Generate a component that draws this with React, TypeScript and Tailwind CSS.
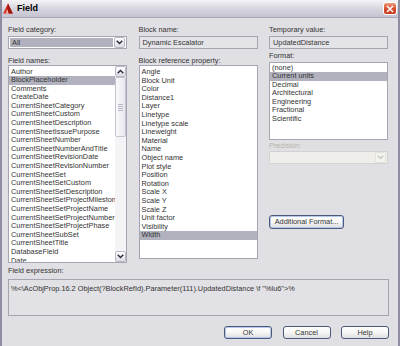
import type { ReactNode } from "react";

const fieldNames = [
  "Author",
  "BlockPlaceholder",
  "Comments",
  "CreateDate",
  "CurrentSheetCategory",
  "CurrentSheetCustom",
  "CurrentSheetDescription",
  "CurrentSheetIssuePurpose",
  "CurrentSheetNumber",
  "CurrentSheetNumberAndTitle",
  "CurrentSheetRevisionDate",
  "CurrentSheetRevisionNumber",
  "CurrentSheetSet",
  "CurrentSheetSetCustom",
  "CurrentSheetSetDescription",
  "CurrentSheetSetProjectMilestone",
  "CurrentSheetSetProjectName",
  "CurrentSheetSetProjectNumber",
  "CurrentSheetSetProjectPhase",
  "CurrentSheetSubSet",
  "CurrentSheetTitle",
  "DatabaseField",
  "Date",
];

const blockProps = [
  "Angle",
  "Block Unit",
  "Color",
  "Distance1",
  "Layer",
  "Linetype",
  "Linetype scale",
  "Lineweight",
  "Material",
  "Name",
  "Object name",
  "Plot style",
  "Position",
  "Rotation",
  "Scale X",
  "Scale Y",
  "Scale Z",
  "Unit factor",
  "Visibility",
  "Width",
];

const formats = ["(none)", "Current units", "Decimal", "Architectural", "Engineering", "Fractional", "Scientific"];

function Chevron({ up, disabled }: { up?: boolean; disabled?: boolean }) {
  return (
    <svg width="7" height="5" viewBox="0 0 7 5" className={up ? "rotate-180" : ""}>
      <path
        d="M0.7 0.8 L3.5 3.6 L6.3 0.8"
        fill="none"
        stroke={disabled ? "#cac8c0" : "#2b2b3a"}
        strokeWidth="1.4"
      />
    </svg>
  );
}

function ArrowButton({ up, disabled }: { up?: boolean; disabled?: boolean }) {
  return (
    <div
      className={`flex h-[11px] w-[11px] items-center justify-center rounded-[2px] border ${
        disabled
          ? "border-[#e2e1dc] bg-[#f3f3ef]"
          : "border-[#b9b8c8] bg-gradient-to-b from-white to-[#dcdce6]"
      }`}
    >
      <Chevron up={up} disabled={disabled} />
    </div>
  );
}

function Label({ children, className = "" }: { children: ReactNode; className?: string }) {
  return <div className={`h-[9px] leading-[9px] whitespace-nowrap ${className}`}>{children}</div>;
}

function Row({ text, selected }: { text: string; selected?: boolean }) {
  return (
    <div
      className={`h-[8.6px] leading-[8.6px] whitespace-nowrap overflow-hidden pl-[2px] ${
        selected ? "bg-[#b2b2bf]" : ""
      }`}
    >
      {text}
    </div>
  );
}

function XpButton({ children, className = "" }: { children: ReactNode; className?: string }) {
  return (
    <div
      className={`flex items-center justify-center rounded-[3px] border border-[#4b5a78] bg-gradient-to-b from-white via-[#f6f6f4] to-[#dedde2] leading-none ${className}`}
    >
      {children}
    </div>
  );
}

export default function App() {
  return (
    <div className="flex h-[346px] w-[400px] flex-col overflow-hidden border-x-2 border-[#8e8da2] bg-[#e0dfe3] font-['Liberation_Sans',Arial,sans-serif] text-[7.35px] text-[#333]">
      {/* Title bar */}
      <div className="flex h-[18px] items-center border-b border-[#a8a7b8] bg-gradient-to-b from-[#f4f4f8] via-[#d7d6df] to-[#c4c3d0] pl-[1px] pr-[1px]">
        <svg width="10" height="11" viewBox="0 0 10 11">
          <polygon points="5,0.5 9.8,10.5 0.2,10.5" fill="#d6281c" />
          <polygon points="5,0.5 9.8,10.5 5.6,10.5 4.2,6" fill="#a3150f" />
          <polygon points="2.6,10.5 4.2,6 5.6,10.5" fill="#f2b9a6" />
        </svg>
        <span className="ml-[4px] text-[9px] font-bold text-black">Field</span>
        <div className="ml-auto flex h-[13px] w-[14px] items-center justify-center rounded-[3px] border border-white bg-gradient-to-b from-[#eb9a7f] via-[#d9502f] to-[#c23a1c]">
          <svg width="8" height="8" viewBox="0 0 8 8">
            <path d="M1 1 L7 7 M7 1 L1 7" stroke="white" strokeWidth="1.6" />
          </svg>
        </div>
      </div>

      {/* Body */}
      <div className="flex flex-col pl-[6px] pr-[9px] pt-[7px]">
        <div className="grid grid-cols-[119px_119px_119px] items-start gap-x-[11.5px]">
          {/* Column 1 */}
          <div className="flex flex-col">
            <Label>Field category:</Label>
            <div className="mt-[2px] flex h-[13px] items-center border border-[#a5a4b0] bg-white p-[1px]">
              <div className="flex h-full flex-1 items-center bg-[#b2b2bf] pl-[2px]">All</div>
              <div className="ml-[1px]">
                <ArrowButton />
              </div>
            </div>
            <Label className="mt-[6.5px]">Field names:</Label>
            <div className="mt-[0.5px] flex h-[198px] border border-[#a5a4b0] bg-white">
              <div className="flex-1 overflow-hidden pt-[1.5px]">
                {fieldNames.map((n) => (
                  <Row key={n} text={n} selected={n === "BlockPlaceholder"} />
                ))}
              </div>
              <div className="flex w-[11px] flex-col bg-[#f4f4f6]">
                <ArrowButton up />
                <div className="flex-1">
                  <div className="flex h-[60px] flex-col items-center justify-center gap-[1px] rounded-[2px] border border-[#c4c3d2] bg-gradient-to-r from-[#fafafc] to-[#e6e6ee]">
                    <div className="h-[1px] w-[5px] bg-[#b8b7c6]" />
                    <div className="h-[1px] w-[5px] bg-[#b8b7c6]" />
                    <div className="h-[1px] w-[5px] bg-[#b8b7c6]" />
                    <div className="h-[1px] w-[5px] bg-[#b8b7c6]" />
                  </div>
                </div>
                <ArrowButton />
              </div>
            </div>
          </div>

          {/* Column 2 */}
          <div className="flex flex-col">
            <Label>Block name:</Label>
            <div className="mt-[2px] flex h-[13px] items-center border border-[#a5a4b0] bg-[#e4e3e7] pl-[3px]">
              Dynamic Escalator
            </div>
            <Label className="mt-[6.5px]">Block reference property:</Label>
            <div className="mt-[0.5px] h-[194px] overflow-hidden border border-[#a5a4b0] bg-white pt-[2px]">
              {blockProps.map((n) => (
                <Row key={n} text={n} selected={n === "Width"} />
              ))}
            </div>
          </div>

          {/* Column 3 */}
          <div className="flex flex-col">
            <Label>Temporary value:</Label>
            <div className="mt-[2px] flex h-[13px] items-center border border-[#a5a4b0] bg-[#e4e3e7] pl-[3px]">
              UpdatedDistance
            </div>
            <Label className="mt-[1.5px]">Format:</Label>
            <div className="mt-[2.5px] h-[77.5px] overflow-hidden border border-[#a5a4b0] bg-white pt-[0.5px]">
              {formats.map((n) => (
                <Row key={n} text={n} selected={n === "Current units"} />
              ))}
            </div>
            <Label className="mt-[1.5px] text-[#b5b3a8]">Precision:</Label>
            <div className="mt-[0.5px] flex h-[13.5px] items-center justify-end border border-[#d3d2d0] bg-[#efeeeb] p-[1px]">
              <ArrowButton disabled />
            </div>
            <XpButton className="mt-[51px] h-[14px] w-[75px] shadow-[inset_0_0_0_1px_#b4c8ee]">
              Additional Format...
            </XpButton>
          </div>
        </div>

        <Label className="mt-[3px]">Field expression:</Label>
        <div className="mt-[4px] h-[37px] border border-[#a5a4b0] bg-[#e2e1e5] pl-[2px] pt-[4px] leading-[9px] whitespace-nowrap overflow-hidden">
          {'%<\\AcObjProp.16.2 Object(?BlockRefId).Parameter(111).UpdatedDistance \\f "%lu6">%'}
        </div>

        <div className="mt-[10px] flex justify-end gap-[10.5px]">
          <XpButton className="h-[12.5px] w-[48px] shadow-[inset_0_0_0_1px_#b4c8ee]">OK</XpButton>
          <XpButton className="h-[12.5px] w-[48px]">Cancel</XpButton>
          <XpButton className="h-[12.5px] w-[48px]">Help</XpButton>
        </div>
      </div>
    </div>
  );
}
